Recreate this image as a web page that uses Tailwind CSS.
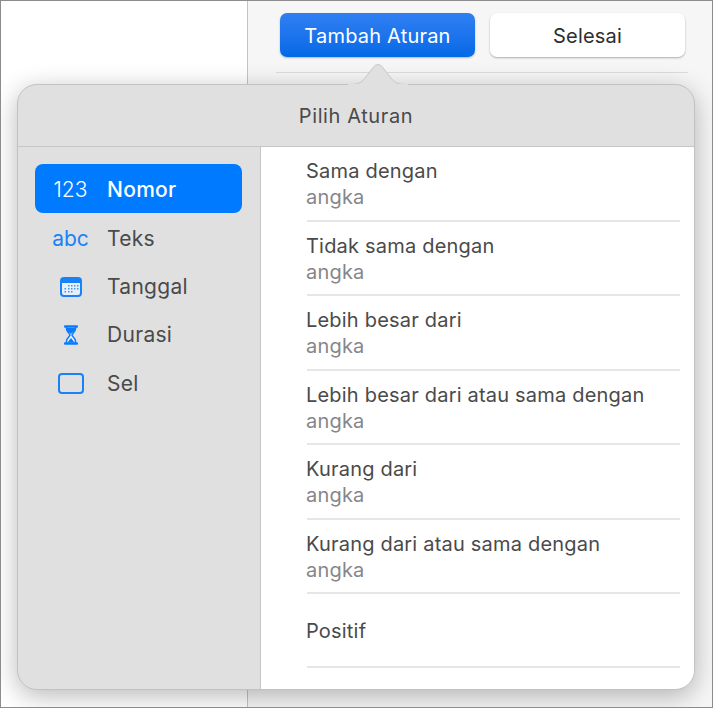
<!DOCTYPE html>
<html lang="en">
<head>
    <meta charset="UTF-8">
    <title>Pilih Aturan</title>
    <script src="https://cdn.jsdelivr.net/npm/@tailwindcss/browser@4"></script>
</head>
<body class="font-['Inter',sans-serif] overflow-hidden">
    <div class="relative w-[713px] h-[708px] overflow-hidden border border-[#8c8c8c] bg-white flex">
        <div class="w-[247px] shrink-0 border-r border-[#c4c4c4]"></div>
        <div class="flex-1 bg-[#f6f6f6] pl-[28px] pr-[24px]">
            <div class="flex gap-[15px] pl-[4px] pt-[12px] pb-[15px] border-b border-[#dcdcdc]">
                <div class="w-[195px] h-[44px] pt-[2px] rounded-[7px] bg-gradient-to-b from-[#2f7ff2] to-[#0069e6] shadow-[0_1px_2px_rgba(0,0,0,0.25)] text-white text-[20px] tracking-[0.2px] flex items-center justify-center">Tambah Aturan</div>
                <div class="w-[195px] h-[44px] pt-[2px] rounded-[7px] bg-white shadow-[0_1px_2px_rgba(0,0,0,0.3)] text-[#2e2e2e] text-[20px] tracking-[0.2px] flex items-center justify-center">Selesai</div>
            </div>
        </div>

        <div class="absolute left-[16px] top-[83px] w-[678px] h-[606px] rounded-[20px] border border-[#c2c2c2] bg-[#e0e0e0] shadow-[0_6px_26px_rgba(0,0,0,0.28)] flex flex-col">
            <svg class="absolute left-[329.5px] top-[-22px]" width="60" height="22" viewBox="0 0 60 22">
                <path d="M0 21.500 C10 21.500 13 20 17 15 L26 3.500 C28 1 32 1 34 3.500 L43 15 C47 20 50 21.500 60 21.500" fill="#e0e0e0" stroke="#c8c8c8" stroke-width="1"/>
                <rect x="0" y="21" width="60" height="1" fill="#e0e0e0"/>
            </svg>
            <div class="h-[62px] shrink-0 border-b border-[#c6c6c6] flex items-center justify-center text-[20px] tracking-[0.6px] text-[#4a4a4a]">Pilih Aturan</div>
            <div class="flex-1 flex min-h-0">
                <div class="w-[243px] shrink-0 border-r border-[#c6c6c6] pl-[17px] pr-[18px] pt-[17px] text-[21px] tracking-[0.3px]">
                    <div class="h-[49px] pt-[2px] rounded-[8px] bg-[#007aff] text-white flex items-center">
                        <span class="w-[71px] mr-[1px] text-center font-light tracking-normal">123</span>
                        <span class="font-medium">Nomor</span>
                    </div>
                    <div class="h-[49px] pt-[2px] flex items-center text-[#4a4a4a]">
                        <span class="w-[71px] mr-[1px] text-center text-[#1a82f7] tracking-normal">abc</span>
                        <span>Teks</span>
                    </div>
                    <div class="h-[49px] flex items-center text-[#4a4a4a]">
                        <span class="w-[71px] mr-[1px] flex justify-center">
                            <svg width="22" height="20" viewBox="0 0 22 20">
                                <rect x="1" y="1" width="20" height="18" rx="3" fill="#e6effa" stroke="#1a82f7" stroke-width="2"/>
                                <path d="M1 4a3 3 0 0 1 3-3h14a3 3 0 0 1 3 3v2H1z" fill="#1a82f7"/>
                                <g fill="#3f97f6">
                                    <rect x="8" y="8" width="1.500" height="1.500"/><rect x="11" y="8" width="1.500" height="1.500"/><rect x="14" y="8" width="1.500" height="1.500"/><rect x="17" y="8" width="1.500" height="1.500"/>
                                    <rect x="4.500" y="11" width="1.500" height="1.500"/><rect x="8" y="11" width="1.500" height="1.500"/><rect x="11" y="11" width="1.500" height="1.500"/><rect x="14" y="11" width="1.500" height="1.500"/><rect x="17" y="11" width="1.500" height="1.500"/>
                                    <rect x="4.500" y="14" width="1.500" height="1.500"/><rect x="8" y="14" width="1.500" height="1.500"/><rect x="11" y="14" width="1.500" height="1.500"/>
                                </g>
                            </svg>
                        </span>
                        <span>Tanggal</span>
                    </div>
                    <div class="h-[48px] flex items-center text-[#4a4a4a]">
                        <span class="w-[71px] mr-[1px] flex justify-center">
                            <svg width="14" height="20" viewBox="0 0 14 20">
                                <path d="M1 1.500h12M1 18.500h12" stroke="#0a7bff" stroke-width="2.500" stroke-linecap="round"/>
                                <path d="M2.500 2 V4 C2.500 7 6 8.500 6 10 C6 11.500 2.500 13 2.500 16 V18 H11.500 V16 C11.500 13 8 11.500 8 10 C8 8.500 11.500 7 11.500 4 V2 Z" fill="#e6effa" stroke="#0a7bff" stroke-width="1.500"/>
                                <path d="M3 3 H11 V4.500 C11 6.500 8 7.500 7 9 C6 7.500 3 6.500 3 4.500 Z M7 13 L10.500 17.500 H3.500 Z" fill="#0a7bff"/>
                            </svg>
                        </span>
                        <span>Durasi</span>
                    </div>
                    <div class="h-[49px] flex items-center text-[#4a4a4a]">
                        <span class="w-[71px] mr-[1px] flex justify-center">
                            <div class="w-[26px] h-[21px] rounded-[4px] border-2 border-[#1a82f7]"></div>
                        </span>
                        <span>Sel</span>
                    </div>
                </div>
                <div class="flex-1 bg-white rounded-br-[19px] pl-[46px] pr-[14px] text-[20px] leading-[26px] tracking-[0.2px] text-[#4a4a4a]">
                    <div class="h-[75px] border-b-2 border-[#e6e6e6] flex flex-col justify-center"><span class="-ml-[1px]">Sama dengan</span><span class="-ml-[1px] text-[#86868a]">angka</span></div>
                    <div class="h-[74.400px] pt-[2px] border-b-2 border-[#e6e6e6] flex flex-col justify-center"><span class="-ml-[1px]">Tidak sama dengan</span><span class="-ml-[1px] text-[#86868a]">angka</span></div>
                    <div class="h-[74.400px] border-b-2 border-[#e6e6e6] flex flex-col justify-center"><span class="-ml-[1px]">Lebih besar dari</span><span class="-ml-[1px] text-[#86868a]">angka</span></div>
                    <div class="h-[74.400px] pt-[2px] border-b-2 border-[#e6e6e6] flex flex-col justify-center"><span class="-ml-[1px]">Lebih besar dari atau sama dengan</span><span class="-ml-[1px] text-[#86868a]">angka</span></div>
                    <div class="h-[74.400px] pt-[2px] border-b-2 border-[#e6e6e6] flex flex-col justify-center"><span class="-ml-[1px]">Kurang dari</span><span class="-ml-[1px] text-[#86868a]">angka</span></div>
                    <div class="h-[74.400px] pt-[2px] border-b-2 border-[#e6e6e6] flex flex-col justify-center"><span class="-ml-[1px]">Kurang dari atau sama dengan</span><span class="-ml-[1px] text-[#86868a]">angka</span></div>
                    <div class="h-[74.400px] pt-[2px] border-b-2 border-[#e6e6e6] flex flex-col justify-center"><span class="-ml-[1px]">Positif</span></div>
                </div>
            </div>
        </div>
    </div>
</body>
</html>
